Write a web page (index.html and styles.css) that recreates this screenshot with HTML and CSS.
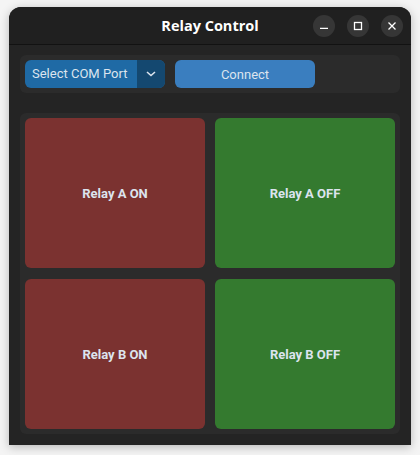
FILE: index.html
```html
<!DOCTYPE html>
<html>
<head>
<meta charset="utf-8">
<link rel="stylesheet" href="styles.css">
</head>
<body>
<div class="window">
  <div class="titlebar">
    <div class="title">Relay Control</div>
    <div class="controls">
      <div class="ctl"><svg width="12" height="12" viewBox="0 0 12 12"><line x1="2" y1="8.3" x2="10" y2="8.3" stroke="#fff" stroke-width="1.3"/></svg></div>
      <div class="ctl"><svg width="12" height="12" viewBox="0 0 12 12"><rect x="2.5" y="2.5" width="7" height="7" fill="none" stroke="#fff" stroke-width="1.3"/></svg></div>
      <div class="ctl"><svg width="12" height="12" viewBox="0 0 12 12"><path d="M2.5 2.5 L9.5 9.5 M9.5 2.5 L2.5 9.5" stroke="#fff" stroke-width="1.3"/></svg></div>
    </div>
  </div>
  <div class="content">
    <div class="topframe">
      <div class="combo">
        <div class="combo-text">Select COM Port</div>
        <div class="combo-arrow"><svg width="10" height="6" viewBox="0 0 10 6"><path d="M1 1 L5 4.5 L9 1" fill="none" stroke="#dce4ee" stroke-width="1.6"/></svg></div>
      </div>
      <div class="btn connect">Connect</div>
    </div>
    <div class="grid">
      <div class="relay on">Relay A ON</div>
      <div class="relay off">Relay A OFF</div>
      <div class="relay on">Relay B ON</div>
      <div class="relay off">Relay B OFF</div>
    </div>
  </div>
</div>
</body>
</html>
```
FILE: styles.css
```css
html, body { margin: 0; padding: 0; }
body {
  background: #f4f4f4;
  width: 420px;
  height: 455px;
  overflow: hidden;
  font-family: Roboto, "Liberation Sans", sans-serif;
}
.window {
  margin: 7px 9px 0 9px;
  width: 402px;
  height: 438px;
  border-radius: 12px 12px 0 0;
  overflow: hidden;
  background: #242424;
  box-shadow: 0 2px 10px rgba(0,0,0,0.25);
  display: flex;
  flex-direction: column;
}
.titlebar {
  height: 37px;
  background: #202020;
  border-bottom: 1px solid #121212;
  display: flex;
  align-items: center;
  justify-content: center;
  position: relative;
}
.title {
  color: #ffffff;
  font-family: "Open Sans", "DejaVu Sans", sans-serif;
  font-weight: 700;
  font-size: 14.5px;
}
.controls {
  position: absolute;
  right: 8px;
  top: 8px;
  display: flex;
  gap: 12px;
}
.ctl {
  width: 22px;
  height: 22px;
  border-radius: 50%;
  background: #363636;
  display: flex;
  align-items: center;
  justify-content: center;
}
.content {
  flex: 1;
  padding: 10px 11px 11px 11px;
  display: flex;
  flex-direction: column;
  gap: 20px;
}
.topframe {
  height: 38px;
  background: #2b2b2b;
  border-radius: 6px;
  padding: 0 5px;
  display: flex;
  align-items: center;
  gap: 10px;
}
.combo {
  width: 140px;
  height: 28px;
  border-radius: 6px;
  overflow: hidden;
  display: flex;
  background: #1f6aa5;
}
.combo-text {
  flex: 1;
  color: #dce4ee;
  font-size: 13px;
  line-height: 28px;
  padding-left: 7px;
}
.combo-arrow {
  width: 28px;
  background: #144870;
  display: flex;
  align-items: center;
  justify-content: center;
}
.btn {
  width: 140px;
  height: 28px;
  border-radius: 6px;
  background: #3a7ebf;
  color: #dce4ee;
  font-size: 13px;
  display: flex;
  align-items: center;
  justify-content: center;
}
.grid {
  background: #2b2b2b;
  border-radius: 6px;
  padding: 5px;
  display: grid;
  grid-template-columns: 180px 180px;
  grid-template-rows: 150px 150px;
  column-gap: 10px;
  row-gap: 11px;
}
.relay {
  border-radius: 6px;
  display: flex;
  align-items: center;
  justify-content: center;
  color: #dce4ee;
  font-weight: 700;
  font-size: 13px;
}
.on { background: #7b3230; }
.off { background: #347a2f; }
```
